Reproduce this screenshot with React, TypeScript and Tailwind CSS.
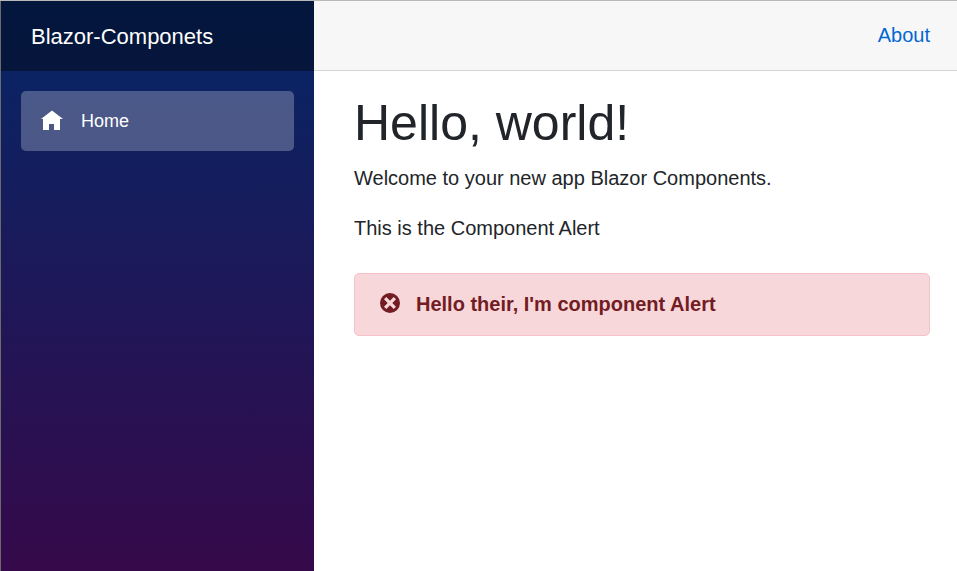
export default function App() {
  return (
    <div className="flex h-[571px] w-[957px] border-t border-[#b8b8b8] bg-white font-['Liberation_Sans',Arial,sans-serif] text-[20px] leading-[30px] text-[#212529]">
      <aside className="flex w-[314px] shrink-0 flex-col border-l border-[#6b6b6b] bg-[linear-gradient(180deg,#052767_0px,#3a0647_625px)]">
        <div className="flex h-[70px] shrink-0 items-center bg-black/40 pl-[30px] pt-[2px] text-[22px] text-white">Blazor-Componets</div>
        <nav className="px-5 pt-5">
          <a className="flex h-[60px] items-center rounded-[5px] bg-white/25 pb-px pl-5 text-[18px] text-white">
            <svg className="mb-px mr-[18px] h-5 w-[22px]" viewBox="0 0 22 20" fill="currentColor"><path d="M11 .5 0 9h2v11h6v-6h5v6h6V9h3z" /></svg>
            Home
          </a>
        </nav>
      </aside>
      <main className="flex min-w-0 flex-1 flex-col">
        <header className="flex h-[70px] shrink-0 items-center justify-end border-b border-[#d6d5d5] bg-[#f7f7f7] pb-px pr-[27px] text-[#0366d6]">About</header>
        <article className="pl-10 pr-[27px] pt-[22px]">
          <h1 className="mb-[10px] text-[50px] leading-[60px]">Hello, world!</h1>
          <p className="mb-5">Welcome to your new app Blazor Components.</p>
          <p className="mb-[30px]">This is the Component Alert</p>
          <div className="flex h-[63px] items-center rounded-[5px] border border-[#f5c2c7] bg-[#f8d7da] pb-px pl-[25px] font-bold text-[#721c24]">
            <svg className="mb-[2px] mr-4 size-5" viewBox="0 0 20 20" fill="currentColor"><path d="M10 0a10 10 0 1 0 0 20 10 10 0 0 0 0-20zM6.3 4 10 7.7 13.7 4 16 6.3 12.3 10l3.7 3.7-2.3 2.3-3.7-3.7L6.3 16 4 13.7 7.7 10 4 6.3z" fillRule="evenodd" /></svg>
            Hello their, I'm component Alert
          </div>
        </article>
      </main>
    </div>
  );
}
